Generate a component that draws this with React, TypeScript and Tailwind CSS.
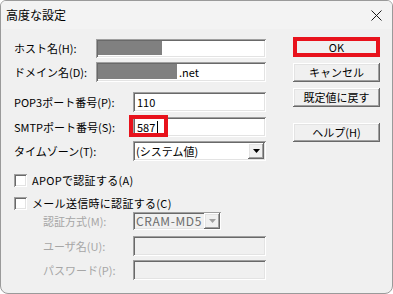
const raised =
  "shadow-[inset_-1px_-1px_#696969,inset_1px_1px_#ffffff,inset_-2px_-2px_#a0a0a0,inset_2px_2px_#e3e3e3]";
const sunken =
  "shadow-[inset_1px_1px_#a0a0a0,inset_-1px_-1px_#ffffff,inset_2px_2px_#696969,inset_-2px_-2px_#e3e3e3]";

const DropButton = ({ disabled }: { disabled?: boolean }) => (
  <div className={`w-[16px] h-[16px] shrink-0 bg-[#f0f0f0] flex items-center justify-center ${raised}`}>
    <svg width="7" height="4" viewBox="0 0 7 4">
      <path d="M0 0h7L3.5 4z" fill={disabled ? "#a0a0a0" : "#000"} />
    </svg>
  </div>
);

const Btn = ({ label, className = "" }: { label: string; className?: string }) => (
  <div
    className={`w-[87px] h-[19px] bg-[#f0f0f0] flex items-center justify-center text-[11px] text-black ${raised} ${className}`}
  >
    {label}
  </div>
);

const Check = ({ label }: { label: string }) => (
  <div className="h-[13px] flex items-center gap-[5px]">
    <div className={`w-[13px] h-[13px] bg-white ${sunken}`}></div>
    <span className="text-[11px] leading-none whitespace-nowrap tracking-[0.3px]">{label}</span>
  </div>
);

export default function App() {
  return (
    <div
      className="w-[393px] h-[294px] bg-[#f0f0f0] border border-[#9a9a9a] rounded-t-[6px] rounded-b-[8px] overflow-hidden flex flex-col text-black"
      style={{ fontFamily: '"Noto Sans CJK JP", "Liberation Sans", sans-serif' }}
    >
      {/* title bar */}
      <div className="h-[28px] bg-[#f3f3f3] flex items-center justify-between pl-[5px] pr-[10px]">
        <span className="text-[12px]">高度な設定</span>
        <svg width="11" height="11" viewBox="0 0 11 11">
          <path d="M0.5 0.5l10 10M10.5 0.5l-10 10" stroke="#1a1a1a" strokeWidth="1" />
        </svg>
      </div>

      <div className="flex pl-[13px] pt-[9px] gap-[27px]">
        {/* left column */}
        <div className="w-[252px] flex flex-col text-[11px]">
          <div className="h-[20px] flex items-center">
            <span className="w-[82px] whitespace-nowrap">ホスト名(H):</span>
            <div className={`w-[170px] h-[19px] bg-white p-[2px] flex ${sunken}`}>
              <div className="w-[64px] h-[14px] bg-[#808080]"></div>
            </div>
          </div>
          <div className="h-[20px] mt-[4px] flex items-center">
            <span className="w-[82px] whitespace-nowrap">ドメイン名(D):</span>
            <div className={`w-[170px] h-[20px] bg-white p-[2px] flex items-center ${sunken}`}>
              <div className="w-[79px] h-[15px] bg-[#808080] self-start"></div>
              <span className="ml-[2px] leading-none">.net</span>
            </div>
          </div>

          <div className="h-[20px] mt-[10px] flex items-center">
            <span className="w-[119px] whitespace-nowrap">POP3ポート番号(P):</span>
            <div className={`w-[133px] h-[20px] bg-white pl-[4px] flex items-center ${sunken}`}>
              <span className="leading-none">110</span>
            </div>
          </div>
          <div className="h-[20px] mt-[5px] flex items-center">
            <span className="w-[119px] whitespace-nowrap">SMTPポート番号(S):</span>
            <div className={`relative w-[133px] h-[20px] bg-white pl-[4px] flex items-center ${sunken}`}>
              <span className="leading-none">587</span>
              <span className="ml-[2px] w-px h-[12px] bg-black"></span>
              <div className="absolute left-[-4px] top-[-2px] w-[39px] h-[22px] border-[4px] border-[#e8121c]"></div>
            </div>
          </div>
          <div className="h-[20px] mt-[4px] flex items-center">
            <span className="w-[119px] whitespace-nowrap">タイムゾーン(T):</span>
            <div className={`w-[133px] h-[20px] bg-white pl-[3px] pr-[2px] flex items-center justify-between ${sunken}`}>
              <span className="leading-none">(システム値)</span>
              <DropButton />
            </div>
          </div>

          <div className="mt-[13px]">
            <Check label="APOPで認証する(A)" />
          </div>
          <div className="mt-[10px]">
            <Check label="メール送信時に認証する(C)" />
          </div>

          <div className="h-[18px] mt-[2px] flex items-center pl-[29px] text-[#a6a6a6]">
            <span className="w-[90px] whitespace-nowrap">認証方式(M):</span>
            <div className={`w-[88px] h-[18px] bg-[#f0f0f0] pl-[3px] pr-[1px] flex items-center justify-between overflow-hidden ${sunken}`}>
              <span className="leading-none text-[12px] tracking-[0.6px] text-[#6d6d6d] whitespace-nowrap">CRAM-MD5</span>
              <DropButton disabled />
            </div>
          </div>
          <div className="h-[20px] mt-[6px] flex items-center pl-[29px] text-[#a6a6a6]">
            <span className="w-[90px] whitespace-nowrap">ユーザ名(U):</span>
            <div className={`w-[133px] h-[20px] bg-[#f0f0f0] ${sunken}`}></div>
          </div>
          <div className="h-[20px] mt-[4px] flex items-center pl-[29px] text-[#a6a6a6]">
            <span className="w-[90px] whitespace-nowrap">パスワード(P):</span>
            <div className={`w-[133px] h-[20px] bg-[#f0f0f0] ${sunken}`}></div>
          </div>
        </div>

        {/* right column */}
        <div className="flex flex-col">
          <div className="relative">
            <Btn label="OK" />
            <div className="absolute left-0 top-[-1px] w-[87px] h-[20px] border-[4px] border-[#e8121c]"></div>
          </div>
          <Btn label="キャンセル" className="mt-[6px]" />
          <Btn label="既定値に戻す" className="mt-[6px]" />
          <Btn label="ヘルプ(H)" className="mt-[16px]" />
        </div>
      </div>
    </div>
  );
}
